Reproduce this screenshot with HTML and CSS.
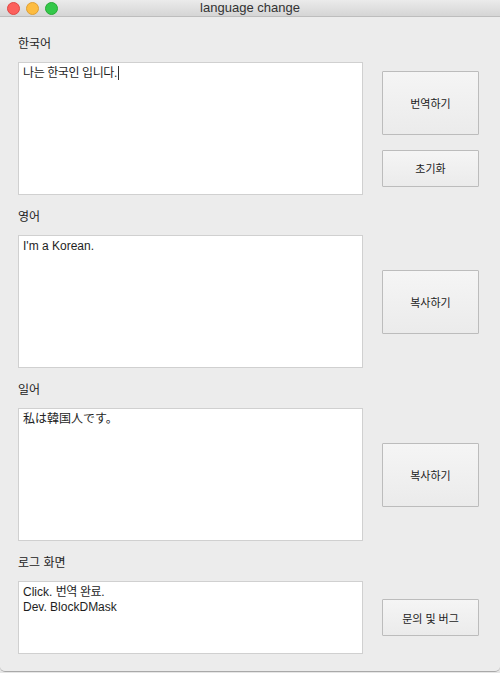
FILE: index.html
```html
<!DOCTYPE html>
<html lang="ko">
<head>
<meta charset="utf-8">
<title>language change</title>
<link rel="stylesheet" href="styles.css">
</head>
<body>
<div class="window">
  <div class="titlebar">
    <div class="lights">
      <span class="light red"></span>
      <span class="light yellow"></span>
      <span class="light green"></span>
    </div>
    <div class="title">language change</div>
  </div>
  <div class="content">
    <section class="section">
      <div class="label">한국어</div>
      <div class="row">
        <div class="box tall"><span class="ko">나는 한국인 입니다.</span><span class="caret"></span></div>
        <div class="side">
          <button class="btn big">번역하기</button>
          <button class="btn small">초기화</button>
        </div>
      </div>
    </section>
    <section class="section">
      <div class="label">영어</div>
      <div class="row">
        <div class="box tall">I'm a Korean.</div>
        <div class="side">
          <button class="btn big">복사하기</button>
        </div>
      </div>
    </section>
    <section class="section">
      <div class="label">일어</div>
      <div class="row">
        <div class="box tall ja" lang="ja">私は韓国人です。</div>
        <div class="side">
          <button class="btn big">복사하기</button>
        </div>
      </div>
    </section>
    <section class="section">
      <div class="label">로그 화면</div>
      <div class="row">
        <div class="box short">Click. <span class="ko">번역 완료.</span><br>Dev. BlockDMask</div>
        <div class="side">
          <button class="btn small">문의 및 버그</button>
        </div>
      </div>
    </section>
  </div>
</div>
</body>
</html>
```

FILE: styles.css
```css
html, body {
  margin: 0;
  padding: 0;
  background: #e6e6e6;
}
body {
  width: 500px;
  height: 673px;
  overflow: hidden;
  font-family: "Liberation Sans", "Noto Sans CJK KR", sans-serif;
  font-size: 12px;
  color: #222;
}
.window {
  height: 671px;
  background: #ececec;
  border-bottom: 1px solid #a9a9a9;
  border-radius: 0 0 5px 5px;
  overflow: hidden;
}
.titlebar {
  height: 16px;
  border-bottom: 1px solid #bdbdbd;
  background: linear-gradient(#ebebeb, #d5d5d5);
  display: flex;
  align-items: center;
  justify-content: center;
  position: relative;
}
.lights {
  position: absolute;
  left: 7px;
  top: 2px;
  display: flex;
  gap: 6px;
}
.light {
  width: 11px;
  height: 11px;
  border-radius: 50%;
  display: block;
}
.red { background: #fc605c; border: 0.5px solid #df4744; }
.yellow { background: #fdbc40; border: 0.5px solid #de9f34; }
.green { background: #34c84a; border: 0.5px solid #27aa35; }
.title {
  font-size: 13px;
  color: #333;
  line-height: 16px;
}
.content {
  padding: 19px 21px 0 18px;
  display: flex;
  flex-direction: column;
  gap: 14px;
}
.label {
  height: 16px;
  line-height: 16px;
  margin-bottom: 10px;
  font-size: 12px;
}
.row {
  display: flex;
  align-items: center;
  gap: 19px;
}
.box {
  width: 345px;
  box-sizing: border-box;
  background: #fff;
  border: 1px solid #d0d0d0;
  padding: 3px 4px;
  line-height: 15px;
  font-size: 12px;
  color: #1e1e1e;
}
.ko { letter-spacing: -0.4px; }
.tall { height: 133px; }
.short { height: 73px; }
.ja { font-family: "Liberation Sans", "Noto Sans CJK JP", sans-serif; }
.caret {
  display: inline-block;
  width: 1px;
  height: 14px;
  background: #333;
  vertical-align: -3px;
  margin-left: 1px;
}
.side {
  width: 97px;
  display: flex;
  flex-direction: column;
  gap: 15px;
}
.btn {
  width: 97px;
  box-sizing: border-box;
  border: 1px solid #bcbcbc;
  border-radius: 1px;
  background: linear-gradient(#f5f5f5, #ebebeb);
  font-family: "Liberation Sans", "Noto Sans CJK KR", sans-serif;
  font-size: 11px;
  color: #222;
  padding: 0;
}
.big { height: 64px; }
.small { height: 37px; }
```
